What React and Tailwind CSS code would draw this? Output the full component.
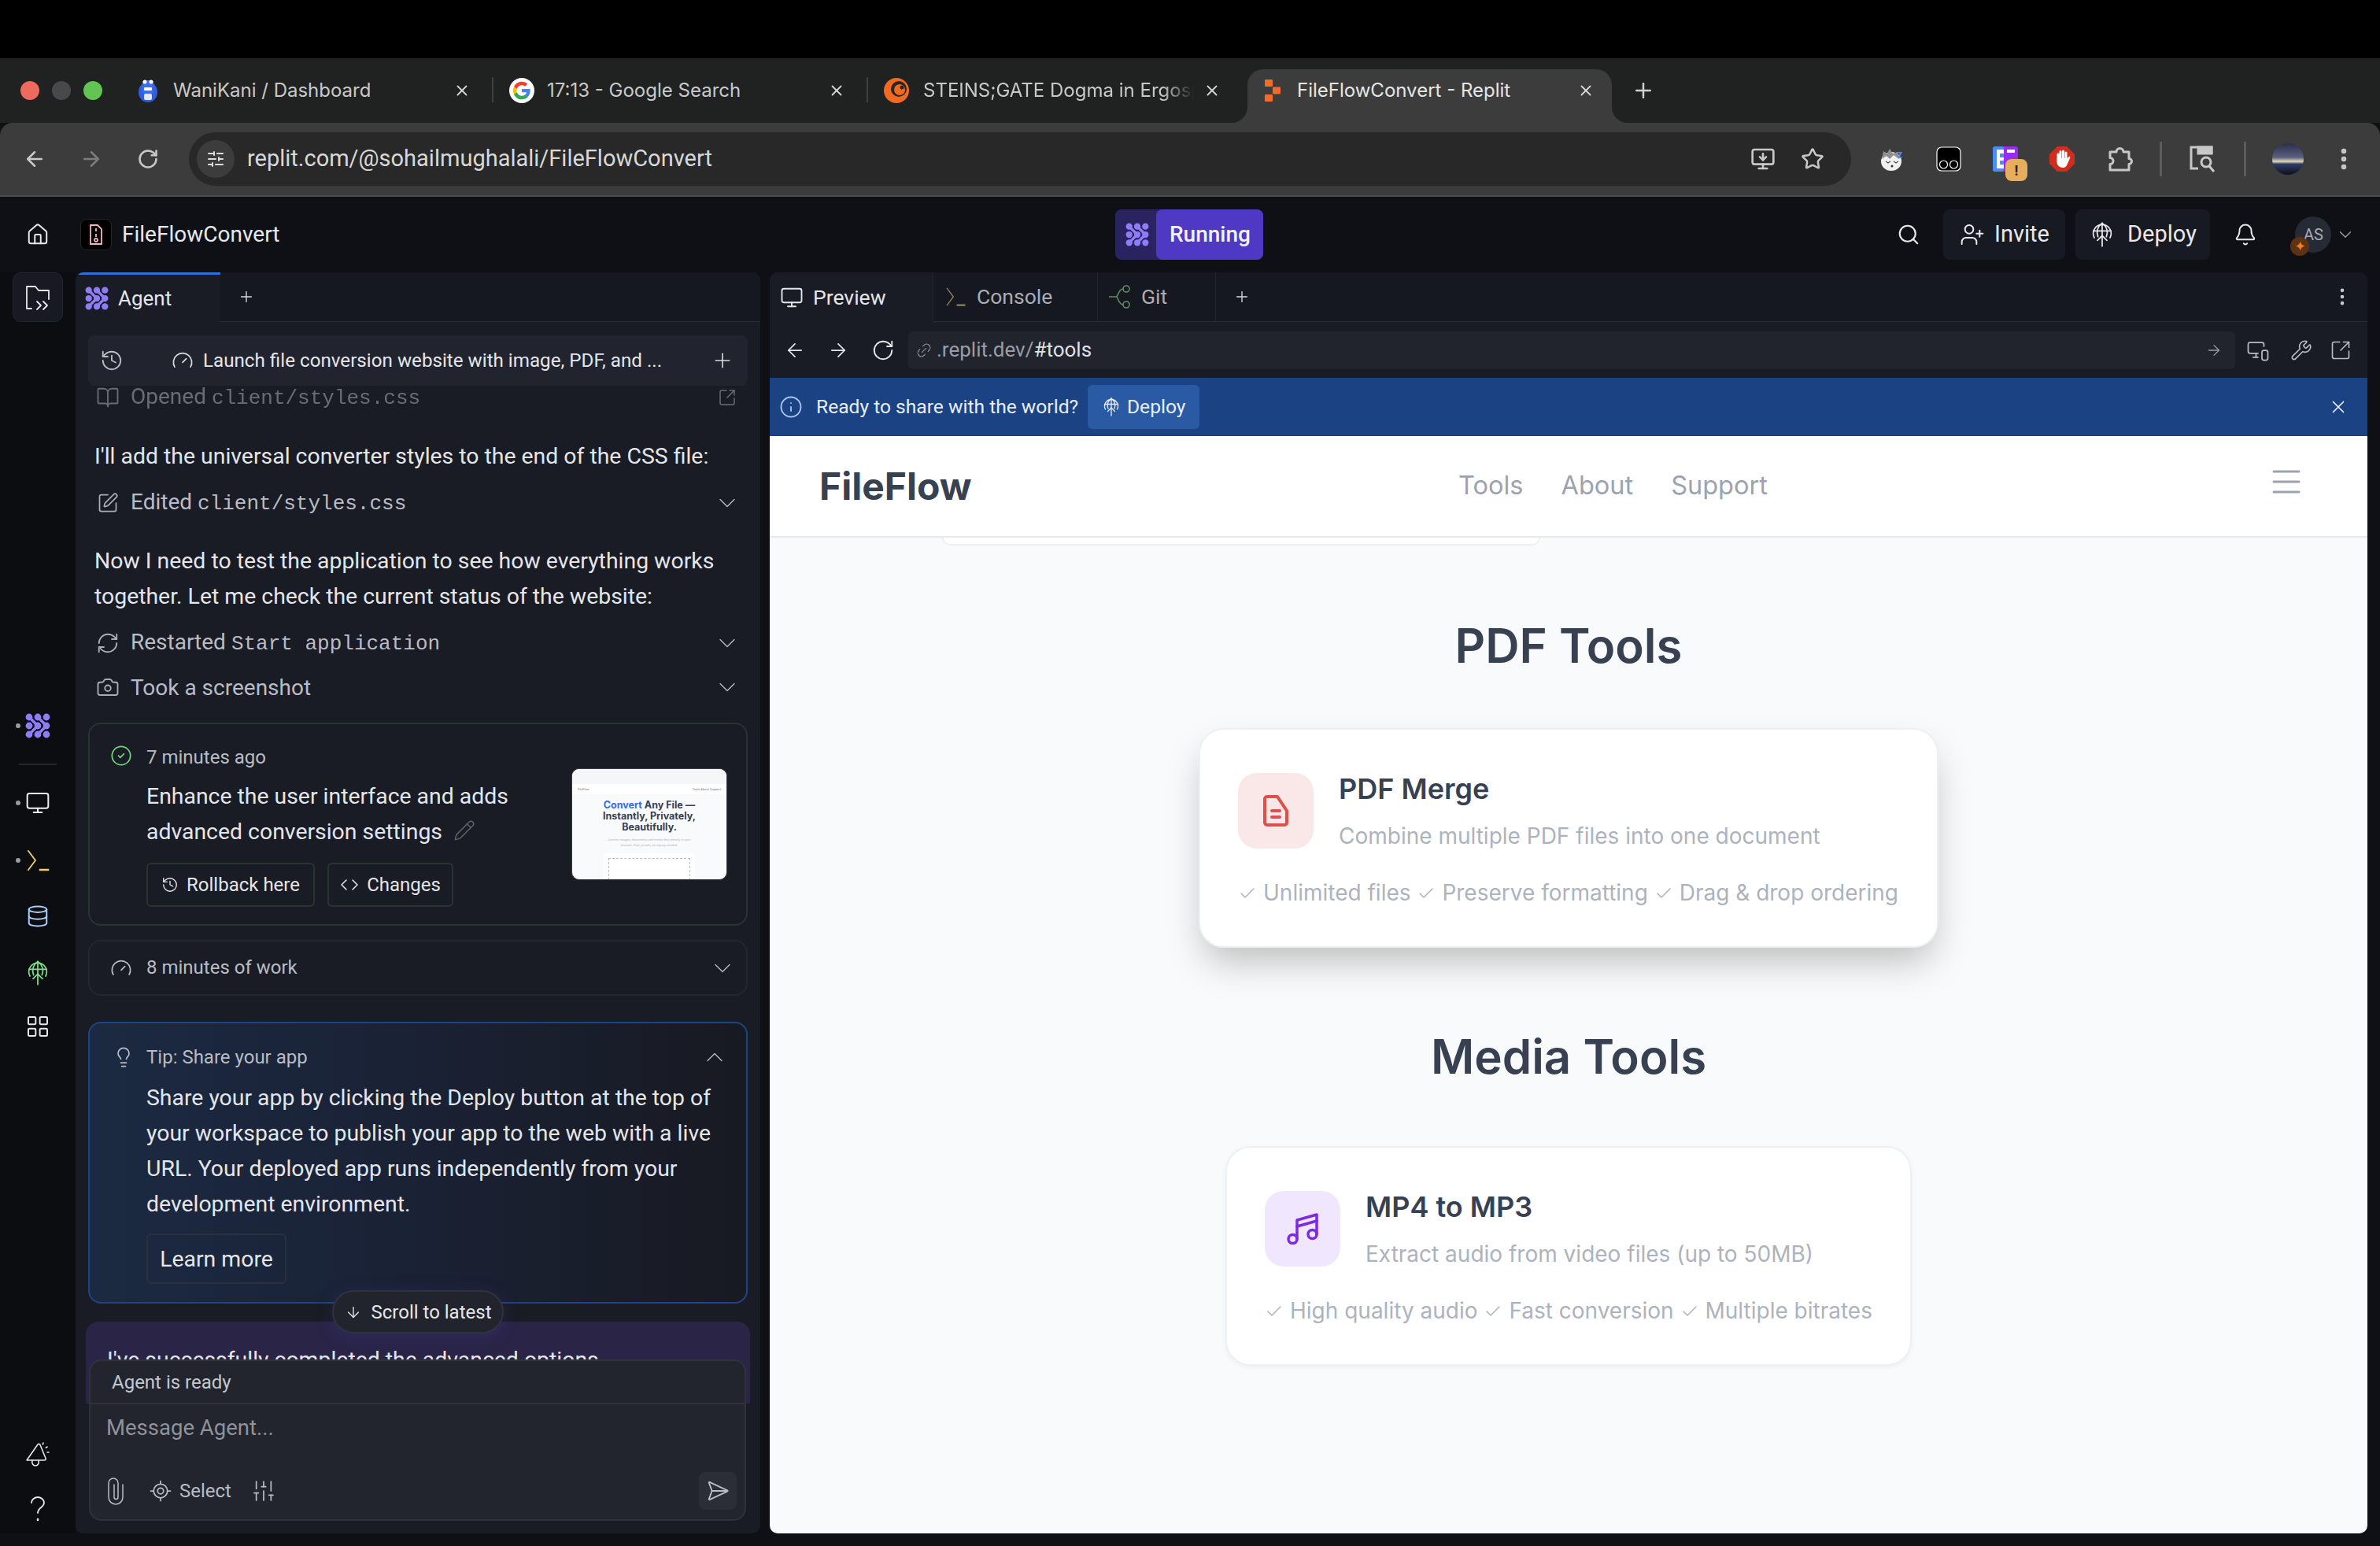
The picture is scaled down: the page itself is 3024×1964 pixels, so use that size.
import React from 'react';
import {
  ArrowDown, ArrowLeft, ArrowRight, Bell, BookOpen, Camera, Check, ChevronDown, ChevronUp, Code,
  Database, EllipsisVertical, Gauge, History, House, Info, LayoutGrid, Lightbulb, Link2,
  LocateFixed, Monitor, MonitorSmartphone, Pencil, Plus, RefreshCw, RotateCw, Search,
  SendHorizontal, SlidersVertical, SquareArrowOutUpRight, SquarePen, Star, UserPlus, Wrench, X,
  MonitorDown, CircleCheck,
} from 'lucide-react';

function AgentLogo({ size = 32, color = '#8f7cf7' }) {
  return (
    <svg width={size} height={size} viewBox="0 0 32 32" fill={color} stroke="none">
      <path d="M5 5L16 16L5 27M16 5L27 16L16 27" fill="none" stroke={color} strokeWidth="3.600" />
      <circle cx="5" cy="5" r="4.400" />
      <circle cx="16" cy="5" r="4.400" />
      <circle cx="27" cy="5" r="4.400" />
      <circle cx="5" cy="16" r="4.400" />
      <circle cx="16" cy="16" r="4.400" />
      <circle cx="27" cy="16" r="4.400" />
      <circle cx="5" cy="27" r="4.400" />
      <circle cx="16" cy="27" r="4.400" />
      <circle cx="27" cy="27" r="4.400" />
    </svg>
  );
}

function DeployIcon({ size = 30, color = 'currentColor' }) {
  return (
    <svg width={size} height={size} viewBox="0 0 24 24" fill="none" stroke={color} strokeWidth="1.300" strokeLinecap="round" strokeLinejoin="round">
      <path d="M4.500 15a8.500 8.500 0 1 1 15 0" />
      <path d="M3.500 8.500h17" />
      <path d="M12 1v22" />
      <path d="M8 14c-1.500-4-1-9 4-13 5 4 5.500 9 4 13" />
      <path d="M7.500 17.500l4.500-4.500 4.500 4.500" />
    </svg>
  );
}

function ChromeTab({ icon, title, box, active, fade, gap }) {
  return (
    <div className={`relative flex h-[68px] items-center pb-[14px] ${box} ${active ? 'rounded-t-[20px] bg-[#3c3c3c] text-[#e6e6e6]' : 'text-[#c9c9c9]'}`}>
      {active && (
        <>
          <div className="absolute bottom-0 left-[-20px] h-[20px] w-[20px] bg-[#3c3c3c]"><div className="h-full w-full rounded-br-[20px] bg-[#202221]" /></div>
          <div className="absolute bottom-0 right-[-20px] h-[20px] w-[20px] bg-[#3c3c3c]"><div className="h-full w-full rounded-bl-[20px] bg-[#202221]" /></div>
        </>
      )}
      <div className="flex w-[32px] shrink-0 justify-center">{icon}</div>
      <div className={`${gap} flex-1 overflow-hidden whitespace-nowrap font-[Inter,sans-serif] text-[24px] ${fade ? 'mr-[12px] [mask-image:linear-gradient(90deg,black_88%,transparent)]' : ''}`}>{title}</div>
      <X size={22} strokeWidth={2} className="shrink-0 text-[#d5d5d5]" />
    </div>
  );
}

function WaniKani() {
  return (
    <svg width="26" height="32" viewBox="0 0 26 32">
      <ellipse cx="13" cy="18" rx="12" ry="13" fill="#2f5fe0" />
      <rect x="6" y="3" width="14" height="17" rx="4" fill="#3f6cea" />
      <circle cx="9" cy="5" r="2.500" fill="#fff" />
      <circle cx="17" cy="5" r="2.500" fill="#fff" />
      <rect x="8" y="12" width="10" height="4" rx="1" fill="#fff" />
      <rect x="8" y="20" width="10" height="8" rx="2" fill="#dfe8ff" />
    </svg>
  );
}

function GoogleG() {
  return (
    <svg width="32" height="32" viewBox="0 0 48 48">
      <circle cx="24" cy="24" r="24" fill="#fff" />
      <path fill="#4285F4" d="M40 24.500c0-1.200-.1-2.300-.3-3.400H24v6.400h9c-.4 2.100-1.600 3.800-3.300 5v4.200h5.300c3.100-2.900 5-7.100 5-12.200z" />
      <path fill="#34A853" d="M24 41c4.500 0 8.200-1.500 11-4.100l-5.300-4.200c-1.500 1-3.400 1.600-5.700 1.600-4.300 0-8-2.900-9.300-6.900h-5.500v4.300C11.900 37.300 17.500 41 24 41z" />
      <path fill="#FBBC05" d="M14.700 27.400c-.7-2.100-.7-4.600 0-6.700v-4.300H9.200c-2.300 4.500-2.300 10.800 0 15.300l5.500-4.300z" />
      <path fill="#EA4335" d="M24 13.700c2.400 0 4.600.8 6.300 2.500l4.700-4.700C32.200 8.700 28.500 7 24 7 17.500 7 11.900 10.700 9.200 16.400l5.500 4.300c1.300-4 5-7 9.300-7z" />
    </svg>
  );
}

function Crunchyroll() {
  return (
    <svg width="32" height="32" viewBox="0 0 32 32">
      <circle cx="16" cy="16" r="16" fill="#f26a21" />
      <circle cx="19" cy="14" r="10" fill="#262826" />
      <circle cx="20" cy="15" r="7" fill="#f26a21" />
      <circle cx="23" cy="12" r="2.500" fill="#262826" />
    </svg>
  );
}

function ReplitMark() {
  return (
    <svg width="20" height="28" viewBox="0 0 20 28" fill="#f26b2a">
      <rect x="0" y="0" width="10" height="9" rx="1" />
      <rect x="10" y="9.500" width="10" height="9" rx="1" />
      <rect x="0" y="19" width="10" height="9" rx="1" />
    </svg>
  );
}

function ExtensionIcons() {
  return (
    <div className="flex items-center">
      <svg width="28" height="32" viewBox="0 0 28 32">
        <ellipse cx="13" cy="19" rx="13" ry="12" fill="#f1f1f1" />
        <path d="M1 16L3 6l5 3 3-6 4 6 6-2 2 9-7-5-5 5-4-4z" fill="#8f8f8f" />
        <path d="M6 19l3 2 3-2M16 19l3 2 3-2" stroke="#555" strokeWidth="1.400" fill="none" />
        <circle cx="14" cy="25" r="1.500" fill="#333" />
        <text x="20" y="15" fontSize="13" fontWeight="700" fill="#4a8df0" fontFamily="Inter">z</text>
      </svg>
      <svg width="32" height="32" viewBox="0 0 32 32" className="ml-[42px]">
        <rect x="1" y="1" width="30" height="30" rx="6" fill="#000" stroke="#fff" strokeWidth="1.200" />
        <circle cx="9.500" cy="23" r="5" fill="none" stroke="#fff" strokeWidth="1.200" />
        <circle cx="22.500" cy="23" r="5" fill="none" stroke="#fff" strokeWidth="1.200" />
      </svg>
      <div className="relative ml-[40px] h-[32px] w-[32px]">
        <svg width="32" height="32" viewBox="0 0 32 32">
          <rect width="32" height="32" rx="3" fill="#9a2cf0" />
          <rect width="14" height="32" rx="3" fill="#4a8ef5" />
          <path d="M5 4h9v5H9v5h5v4H9v5h5v5H5z" fill="#fff" />
          <rect x="18" y="4" width="10" height="4" fill="#fff" />
        </svg>
        <div className="absolute left-[16px] top-[16px] flex h-[28px] w-[28px] items-center justify-center rounded-[8px] bg-[#e6ad5c] text-[18px] font-bold text-[#222]">!</div>
      </div>
      <svg width="32" height="32" viewBox="0 0 32 32" className="ml-[40px]">
        <path d="M10 0h12l10 10v12L22 32H10L0 22V10z" fill="#d02d20" />
        <path d="M11 19v-9M14 18V6.500M17.500 18V6M21 18V8" stroke="#fff" strokeWidth="3" strokeLinecap="round" fill="none" />
        <path d="M9.500 15h13l3-2.500c1 .5 1 1.500.5 2.500l-3 7c-1 3-3 5-6 5-4 0-7.500-3-7.500-7z" fill="#fff" />
      </svg>
      <svg width="32" height="32" viewBox="0 0 32 32" fill="none" stroke="#c7c7c7" strokeWidth="3" strokeLinejoin="round" className="ml-[42px]">
        <path d="M3 7h8a4.500 4.500 0 0 1 9 0h7v8.500a3.500 3.500 0 0 1 0 7V30H3v-7.500a4 4 0 0 0 0-8z" />
      </svg>
    </div>
  );
}

function ChromeBar() {
  return (
    <>
      <div className="h-[74px] bg-black" />
      <div className="flex h-[82px] items-start bg-[#202221] pt-[14px]">
        <div className="flex h-[68px] w-[160px] items-center gap-[16px] pb-[14px] pl-[26px]">
          <div className="h-[24px] w-[24px] rounded-full bg-[#ee6a5f]" />
          <div className="h-[24px] w-[24px] rounded-full bg-[#47494a]" />
          <div className="h-[24px] w-[24px] rounded-full bg-[#61c554]" />
        </div>
        <ChromeTab box="w-[465px] pl-[12px] pr-[27px]" gap="ml-[16px]" icon={<WaniKani />} title="WaniKani / Dashboard" />
        <div className="mt-[10px] h-[32px] w-[2px] bg-[#3f4140]" />
        <ChromeTab box="w-[474px] pl-[20px] pr-[27px]" gap="ml-[16px]" icon={<GoogleG />} title="17:13 - Google Search" />
        <div className="mt-[10px] h-[32px] w-[2px] bg-[#3f4140]" />
        <ChromeTab box="w-[482px] pl-[20px] pr-[34px]" gap="ml-[18px]" icon={<Crunchyroll />} fade title="STEINS;GATE Dogma in Ergosphere" />
        <ChromeTab box="w-[463px] pl-[16px] pr-[22px]" gap="ml-[15px]" active icon={<ReplitMark />} title="FileFlowConvert - Replit" />
        <Plus size={30} strokeWidth={2} className="ml-[25px] mt-[12px] text-[#d0d0d0]" />
      </div>
      <div className="flex h-[94px] items-center rounded-t-[16px] border-b-[2px] border-[#4d4d4d] bg-[#3c3c3c]">
        <ArrowLeft size={30} strokeWidth={2} className="ml-[29px] text-[#c8c8c8]" />
        <ArrowRight size={30} strokeWidth={2} className="ml-[42px] text-[#7d7d7d]" />
        <RotateCw size={28} strokeWidth={2.2} className="ml-[43px] text-[#c8c8c8]" />
        <div className="ml-[38px] flex h-[68px] w-[2112px] items-center rounded-full bg-[#282828]">
          <div className="ml-[10px] flex h-[48px] w-[48px] items-center justify-center rounded-full bg-[#3c3c3c]">
            <SlidersVertical size={24} strokeWidth={2} className="rotate-90 text-[#dedede]" />
          </div>
          <div className="ml-[16px] flex-1 text-[29px] text-[#d8d8d8]">replit.com/@sohailmughalali/FileFlowConvert</div>
          <MonitorDown size={32} strokeWidth={2} className="text-[#c8c8c8]" />
          <Star size={30} strokeWidth={2} className="ml-[32px] mr-[34px] text-[#c8c8c8]" />
        </div>
        <div className="ml-[38px]"><ExtensionIcons /></div>
        <div className="ml-[34px] h-[44px] w-[3px] bg-[#5c5c5c]" />
        <svg width="36" height="36" viewBox="0 0 36 36" fill="none" stroke="#c8c8c8" strokeWidth="3" className="ml-[34px]">
          <path d="M12 30H3V3h26v8" />
          <path d="M12 3h17v8H12z" fill="#c8c8c8" />
          <circle cx="22" cy="22" r="6" />
          <path d="M26 27l6 7" />
        </svg>
        <div className="ml-[34px] h-[44px] w-[3px] bg-[#5c5c5c]" />
        <div className="ml-[33px] h-[40px] w-[40px] rounded-full bg-[linear-gradient(180deg,#2a2e4a_0%,#5b6080_45%,#e3d9b5_58%,#2f3e66_66%,#0c0f1d_100%)]" />
        <EllipsisVertical size={34} strokeWidth={2.6} className="ml-[34px] text-[#c8c8c8]" />
      </div>
    </>
  );
}

function AppHeader() {
  return (
    <div className="flex h-[96px] items-center bg-[#0e1015]">
      <House size={30} strokeWidth={1.6} className="ml-[33px] text-[#e8e8ea]" />
      <div className="ml-[39px] flex h-[40px] w-[40px] items-center justify-center rounded-[8px] border border-[#24262c] bg-black">
        <svg width="18" height="26" viewBox="0 0 18 26" fill="none" stroke="#f0b5c0" strokeWidth="1.800">
          <path d="M2 1h9l5 5v19H2z" />
          <path d="M9 5v4M9 12v4" />
          <circle cx="9" cy="20" r="2" />
        </svg>
      </div>
      <div className="ml-[13px] text-[28px] text-[#e8e9ec]">FileFlowConvert</div>
      <div className="ml-[1062px] flex h-[64px] w-[188px] rounded-[8px] bg-[#2a2362]">
        <div className="flex w-[52px] items-center justify-center pl-[3px]"><AgentLogo size={30} /></div>
        <div className="flex flex-1 items-center justify-center rounded-[8px] bg-[#4f39c4] text-[28px] font-medium text-[#f2f0ff]">Running</div>
      </div>
      <Search size={30} strokeWidth={1.7} className="ml-[805px] text-[#e8e8ea]" />
      <div className="ml-[29px] flex h-[64px] w-[155px] items-center justify-center gap-[12px] rounded-[8px] bg-[#171a22] text-[29px] text-[#e8e9ec]">
        <UserPlus size={32} strokeWidth={1.5} />
        Invite
      </div>
      <div className="ml-[13px] flex h-[64px] w-[171px] items-center justify-center gap-[16px] rounded-[8px] bg-[#171a22] text-[29px] text-[#e8e9ec]">
        <DeployIcon size={32} />
        Deploy
      </div>
      <Bell size={30} strokeWidth={1.6} className="ml-[30px] text-[#e8e8ea]" />
      <div className="relative ml-[48px] flex h-[46px] w-[46px] items-center justify-center rounded-full bg-[#262a35] text-[20px] text-[#a9acb5]">
        AS
        <div className="absolute bottom-[-4px] left-[-6px] flex h-[24px] w-[24px] items-center justify-center rounded-full bg-[#5c3213] text-[18px] leading-none text-[#f07a2c]">✦</div>
      </div>
      <ChevronDown size={26} strokeWidth={1.3} className="ml-[5px] text-[#9c9fa8]" />
    </div>
  );
}

function SideIcon({ children, dot, className = '' }) {
  return (
    <div className={`relative flex h-[40px] w-[96px] items-center justify-center ${className}`}>
      {dot && <div className="absolute left-[20px] h-[6px] w-[6px] rounded-full bg-[#9a9ca4]" />}
      {children}
    </div>
  );
}

function TerminalGlyph({ color = '#f2d06b', size = 34, width = 1.8 }) {
  return (
    <svg width={size} height={size} viewBox="0 0 34 34" fill="none" stroke={color} strokeWidth={width} strokeLinecap="square">
      <path d="M5 5l9 12-9 12" />
      <path d="M20 29h10" strokeWidth="2.500" />
    </svg>
  );
}

function Sidebar() {
  return (
    <div className="flex w-[96px] shrink-0 flex-col items-center bg-[#0c0d11]">
      <div className="mx-auto flex h-[63px] w-[64px] items-center justify-center rounded-[10px] border border-[#24262e] bg-[#171a22]">
        <svg width="32" height="34" viewBox="0 0 32 34" fill="none" stroke="#e8e8ea" strokeWidth="1.800" strokeLinecap="round" strokeLinejoin="round">
          <path d="M8 31H2V3h11l4 5h13v11" />
          <path d="M15 22l5 5-5 5M23 22l5 5-5 5" />
        </svg>
      </div>
      <SideIcon dot className="mt-[493px]"><AgentLogo size={32} /></SideIcon>
      <div className="mt-[28px] h-[2px] w-[48px] bg-[#24262c]" />
      <SideIcon dot className="mt-[28px]"><Monitor size={32} strokeWidth={1.5} className="text-[#eceef0]" /></SideIcon>
      <SideIcon dot className="mt-[33px]"><TerminalGlyph /></SideIcon>
      <SideIcon className="mt-[31px]"><Database size={30} strokeWidth={1.6} className="text-[#a9cdf5]" /></SideIcon>
      <SideIcon className="mt-[32px]"><DeployIcon size={32} color="#7fe08a" /></SideIcon>
      <SideIcon className="mt-[28px]"><LayoutGrid size={32} strokeWidth={1.5} className="text-[#e4e6ea]" /></SideIcon>
      <SideIcon className="mt-[504px]">
        <svg width="32" height="32" viewBox="0 0 32 32" fill="none" stroke="#e4e6ea" strokeWidth="1.600" strokeLinecap="round" strokeLinejoin="round">
          <path d="M2 23L16 3c1-1 2-1 3 .500l7 17c.500 1.500 0 2.500-1.500 2.500z" />
          <path d="M9 23c-1 4 1 7 4 7s5-3 4-7" />
          <path d="M23 1l-1 3M28 6l-3 2M30 13h-3" strokeDasharray="2 2" />
        </svg>
      </SideIcon>
      <SideIcon className="mt-[29px]">
        <svg width="24" height="34" viewBox="0 0 24 34" fill="none" stroke="#e4e6ea" strokeWidth="1.800" strokeLinecap="round">
          <path d="M4 9c0-4 4-7 8-7s8 3 8 7c0 6-8 6-8 13" />
          <path d="M12 30v1" strokeWidth="2.600" />
        </svg>
      </SideIcon>
    </div>
  );
}

function ActionRow({ icon, label, mono, className = '' }) {
  return (
    <div className={`flex h-[34px] items-center pl-[8px] pr-[8px] ${className}`}>
      <div className="flex w-[34px] shrink-0 justify-center text-[#a9acb4]">{icon}</div>
      <div className="ml-[12px] flex-1 whitespace-nowrap text-[28px] text-[#b9bcc4]">
        {label}{mono && ' '}{mono && <span className="font-['Liberation_Mono',monospace] text-[26px]">{mono}</span>}
      </div>
      <ChevronDown size={36} strokeWidth={0.9} className="text-[#b9bcc4]" />
    </div>
  );
}

function Thumbnail() {
  return (
    <div className="h-[142px] w-[198px] shrink-0 overflow-hidden rounded-[10px] border border-[#3a3d46] bg-[#f9fafb] text-center">
      <div className="h-[19px] bg-[#f5f6f7]" />
      <div className="flex h-[13px] items-center justify-between bg-white px-[7px] text-[4px] text-[#777]"><span>FileFlow</span><span>Tools About Support</span></div>
      <div className="mt-[7px] font-[Inter,sans-serif] text-[12.500px] font-bold leading-[14px] text-[#374151]">
        <span className="text-[#2f6fe8]">Convert</span> Any File —<br />Instantly, Privately,<br />Beautifully.
      </div>
      <div className="mt-[5px] text-[4px] leading-[7px] text-[#b5b5b5]">Convert images, documents and media files directly in your<br />browser. Fast, private, no signup needed.</div>
      <div className="mx-auto mt-[7px] h-[40px] w-[116px] rounded-t-[4px] bg-white p-[6px]"><div className="h-full border border-dashed border-b-0 border-[#bbb]" /></div>
    </div>
  );
}

function AgentPanel() {
  return (
    <div className="relative flex w-[870px] shrink-0 flex-col overflow-hidden rounded-[10px] bg-[#191c25]">
      <div className="flex h-[63px] shrink-0 bg-[#161821]">
        <div className="flex w-[184px] items-center gap-[12px] border-t-[3px] border-[#2f6fe0] bg-[#191c25] pl-[12px] text-[26px] text-[#e4e6ea]">
          <AgentLogo size={30} />
          Agent
        </div>
        <div className="flex flex-1 items-center border-b border-[#2a2d36] pl-[22px]">
          <Plus size={22} strokeWidth={1.5} className="text-[#d8dade]" />
        </div>
      </div>
      <div className="mx-[16px] mt-[17px] flex h-[64px] shrink-0 items-center rounded-[8px] bg-[#21242e] text-[24.200px] text-[#e4e6ea]">
        <History size={30} strokeWidth={1.5} className="ml-[15px] text-[#b9bcc4]" />
        <Gauge size={28} strokeWidth={1.5} className="ml-[61px] text-[#d8dade]" />
        <div className="ml-[12px] flex-1 whitespace-nowrap">Launch file conversion website with image, PDF, and ...</div>
        <Plus size={30} strokeWidth={1.3} className="mr-[17px] text-[#d8dade]" />
      </div>
      <div className="min-h-0 flex-1 overflow-hidden px-[16px] text-[28.400px] leading-[45px] text-[#e4e6ea]">
        <div className="flex h-[30px] items-center pl-[10px] pr-[14px] leading-[30px] opacity-50">
          <BookOpen size={30} strokeWidth={1.5} className="text-[#b9bcc4]" />
          <div className="ml-[14px] flex-1 whitespace-nowrap text-[28px] text-[#b9bcc4]">Opened <span className="font-['Liberation_Mono',monospace] text-[26px]">client/styles.css</span></div>
          <SquareArrowOutUpRight size={24} strokeWidth={1.5} className="text-[#b9bcc4]" />
        </div>
        <p className="mt-[37px] whitespace-nowrap px-[8px]">I'll add the universal converter styles to the end of the CSS file:</p>
        <ActionRow className="mt-[20px]" icon={<SquarePen size={28} strokeWidth={1.5} />} label="Edited" mono="client/styles.css" />
        <p className="mt-[34px] px-[8px]">Now I need to test the application to see how everything works together. Let me check the current status of the website:</p>
        <ActionRow className="mt-[20px]" icon={<RefreshCw size={30} strokeWidth={1.5} />} label="Restarted" mono="Start application" />
        <ActionRow className="mt-[22px]" icon={<Camera size={30} strokeWidth={1.5} />} label="Took a screenshot" />

        <div className="mt-[28px] flex h-[258px] rounded-[16px] border-2 border-[#293430] pl-[26px] pr-[24px]">
          <div className="w-[46px] shrink-0 pt-[26px]"><CircleCheck size={28} strokeWidth={1.5} className="text-[#6fd67c]" /></div>
          <div className="flex-1">
            <div className="mt-[22px] text-[24px] leading-[40px] text-[#b9bcc4]">7 minutes ago</div>
            <div className="mt-[7px] text-[#e4e6ea]">
              Enhance the user interface and adds<br />advanced conversion settings
              <Pencil size={28} strokeWidth={1.3} className="ml-[14px] inline-block align-[-3px] text-[#5f626b]" />
            </div>
            <div className="mt-[17px] flex gap-[16px] text-[24px] leading-none text-[#e4e6ea]">
              <div className="flex h-[56px] w-[214px] items-center justify-center gap-[10px] rounded-[6px] border-2 border-[#293430]"><History size={22} strokeWidth={1.5} />Rollback here</div>
              <div className="flex h-[56px] w-[160px] items-center justify-center gap-[10px] rounded-[6px] border-2 border-[#293430]"><Code size={24} strokeWidth={1.5} />Changes</div>
            </div>
          </div>
          <div className="-ml-[62px] mt-[56px]"><Thumbnail /></div>
        </div>

        <div className="mt-[18px] flex h-[71px] items-center rounded-[16px] border-2 border-[#22262f] pl-[26px] pr-[12px] text-[24px] text-[#b9bcc4]">
          <Gauge size={28} strokeWidth={1.5} />
          <div className="ml-[18px] flex-1">8 minutes of work</div>
          <ChevronDown size={36} strokeWidth={0.9} />
        </div>

        <div className="mt-[33px] h-[358px] rounded-[16px] border-2 border-[#1c4587] bg-[linear-gradient(90deg,#1b2a42_0%,#1a2236_45%,#181a22_100%)] pl-[29px] pr-[22px]">
          <div className="flex h-[86px] items-center text-[24px] text-[#b9bcc4]">
            <Lightbulb size={28} strokeWidth={1.5} />
            <div className="ml-[15px] flex-1">Tip: Share your app</div>
            <ChevronUp size={36} strokeWidth={0.9} />
          </div>
          <p className="-mt-[14px] ml-[43px] w-[745px] text-[#e4e6ea]">Share your app by clicking the Deploy button at the top of your workspace to publish your app to the web with a live URL. Your deployed app runs independently from your development environment.</p>
          <div className="ml-[43px] mt-[15px] flex h-[64px] w-[178px] items-center justify-center rounded-[6px] border-2 border-[#2a3040] text-[#e4e6ea]">Learn more</div>
        </div>

        <div className="-mx-[3px] mt-[23px] h-[104px] rounded-t-[16px] bg-[#2a2547] pl-[27px] pt-[26px] text-[#e4e6ea]">I've successfully completed the advanced options</div>
      </div>

      <div className="absolute left-[326px] top-[1293px] flex h-[55px] w-[218px] items-center justify-center gap-[12px] rounded-full border-2 border-[#30333c] bg-[#21242c] text-[24px] text-[#e4e6ea] shadow-[0_4px_20px_rgba(60,50,140,0.35)]">
        <ArrowDown size={22} strokeWidth={1.5} />
        Scroll to latest
      </div>

      <div className="absolute bottom-[16px] left-[17px] h-[205px] w-[835px] rounded-[16px] border-2 border-[#2f323b] bg-[#22252e]">
        <div className="flex h-[55px] items-center border-b-2 border-[#2f323b] pl-[27px] text-[24px] text-[#c5c7ce]">Agent is ready</div>
        <div className="mt-[8px] pl-[20px] text-[27.500px] leading-[44px] text-[#8f929b]">Message Agent...</div>
        <div className="mt-[34px] flex items-center pl-[20px] pr-[10px] text-[#b9bcc4]">
          <svg width="24" height="36" viewBox="0 0 24 36" fill="none" stroke="currentColor" strokeWidth="1.500" strokeLinecap="round">
            <path d="M21 10v16a9 9 0 0 1-18 0V8a6 6 0 0 1 12 0v18a2.500 2.500 0 0 1-5 0V10" />
          </svg>
          <LocateFixed size={30} strokeWidth={1.4} className="ml-[30px]" />
          <div className="ml-[9px] text-[24px]">Select</div>
          <SlidersVertical size={32} strokeWidth={1.3} className="ml-[25px]" />
          <div className="ml-auto flex h-[48px] w-[48px] items-center justify-center rounded-[8px] bg-[#2b2e37]">
            <SendHorizontal size={30} strokeWidth={1.5} />
          </div>
        </div>
      </div>
    </div>
  );
}

function PreviewTab({ icon, label, width, active }) {
  return (
    <div className={`flex items-center gap-[12px] border-r border-[#22252e] pl-[13px] text-[26.500px] ${width} ${active ? 'bg-[#191c25] text-[#e4e6ea]' : 'border-b border-b-[#2a2d36] text-[#a9acb4]'}`}>
      {icon}
      {label}
    </div>
  );
}

function ToolCard({ iconBg, icon, title, desc, features, width, shadow }) {
  return (
    <div className={`h-[279px] rounded-[32px] border-2 border-[#eef0f2] bg-white px-[48px] ${width} ${shadow}`}>
      <div className="mt-[55px] flex">
        <div className={`flex h-[96px] w-[96px] shrink-0 items-center justify-center rounded-[24px] ${iconBg}`}>{icon}</div>
        <div className="ml-[32px] whitespace-nowrap">
          <div className="-mt-[4px] text-[36px] font-semibold leading-[48px] text-[#374151]">{title}</div>
          <div className="mt-[14px] text-[28px] leading-[44px] text-[#adb3bd]">{desc}</div>
        </div>
      </div>
      <div className="mt-[28px] whitespace-nowrap text-[28px] leading-[44px] text-[#adb3bd]">
        {features.map((f, i) => (
          <span key={f}>{i > 0 && ' '}<Check size={24} strokeWidth={1.5} className="mr-[8px] inline-block align-[-3px]" />{f}</span>
        ))}
      </div>
    </div>
  );
}

function PreviewPanel() {
  return (
    <div className="flex min-w-0 flex-1 flex-col overflow-hidden rounded-[10px] bg-[#191c25]">
      <div className="flex h-[63px] shrink-0 bg-[#161821]">
        <PreviewTab active width="w-[208px]" label="Preview" icon={<Monitor size={30} strokeWidth={1.5} />} />
        <PreviewTab width="w-[209px]" label="Console" icon={<TerminalGlyph size={30} color="#8f8558" width={1.5} />} />
        <PreviewTab width="w-[150px]" label="Git" icon={
          <svg width="30" height="32" viewBox="0 0 30 32" fill="none" stroke="#5f8f63" strokeWidth="1.600">
            <path d="M1 16h9M10 16c3 0 3-10 9-10M10 16c3 0 3 10 9 10" />
            <circle cx="23" cy="6" r="4" />
            <circle cx="23" cy="26" r="4" />
          </svg>
        } />
        <div className="flex flex-1 items-center justify-between border-b border-[#2a2d36] pl-[22px] pr-[18px]">
          <Plus size={22} strokeWidth={1.5} className="text-[#d8dade]" />
          <EllipsisVertical size={28} strokeWidth={2} className="text-[#c5c7ce]" />
        </div>
      </div>
      <div className="flex h-[71px] shrink-0 items-center pl-[18px] text-[#e4e6ea]">
        <ArrowLeft size={28} strokeWidth={1.5} />
        <ArrowRight size={28} strokeWidth={1.5} className="ml-[27px]" />
        <RotateCw size={30} strokeWidth={1.5} className="ml-[28px]" />
        <div className="ml-[17px] flex h-[48px] w-[1686px] items-center rounded-[6px] bg-[#21242d] pl-[9px] pr-[16px] text-[26px]">
          <Link2 size={22} strokeWidth={1.3} className="-rotate-45 text-[#8d9099]" />
          <span className="ml-[5px] text-[#9a9da6]">.replit.dev/</span><span className="flex-1 text-[#dfe1e6]">#tools</span>
          <ArrowRight size={22} strokeWidth={1.4} className="text-[#9a9da6]" />
        </div>
        <MonitorSmartphone size={30} strokeWidth={1.4} className="ml-[14px] text-[#b9bcc4]" />
        <Wrench size={28} strokeWidth={1.4} className="ml-[26px] text-[#b9bcc4]" />
        <SquareArrowOutUpRight size={28} strokeWidth={1.4} className="ml-[22px] text-[#b9bcc4]" />
      </div>
      <div className="flex h-[74px] shrink-0 items-center bg-[#1b4384] pl-[12px] pr-[24px] text-[24.600px] text-[#e8eefa]">
        <Info size={30} strokeWidth={1.5} className="text-[#a9c6f2]" />
        <div className="ml-[17px]">Ready to share with the world?</div>
        <div className="ml-[12px] flex h-[56px] w-[142px] items-center justify-center gap-[8px] rounded-[6px] bg-[#2b5aa5]">
          <DeployIcon size={24} />
          Deploy
        </div>
        <X size={26} strokeWidth={1.6} className="ml-auto" />
      </div>
      <div className="relative flex min-h-0 flex-1 flex-col overflow-hidden bg-[#f9fafb] font-[Inter,sans-serif]">
        <div className="flex h-[129px] shrink-0 items-center border-b-2 border-[#e7e9ed] bg-white pl-[63px]">
          <div className="w-[812px] text-[48px] font-bold text-[#374151]">FileFlow</div>
          <div className="flex gap-[48px] text-[32.500px] text-[#9ca3af]"><span>Tools</span><span>About</span><span>Support</span></div>
          <svg width="36" height="30" viewBox="0 0 36 30" fill="none" stroke="#9ca3af" strokeWidth="3" strokeLinecap="round" className="-mt-[12px] ml-auto mr-[85px]">
            <path d="M2 2h32M2 15h32M2 28h32" />
          </svg>
        </div>
        <div className="ml-[219px] h-[10px] w-[760px] shrink-0 rounded-b-[24px] border-2 border-t-0 border-[#eef0f2] bg-white" />
        <div className="flex flex-col items-center">
          <h2 className="mt-[87px] text-[60px] font-semibold leading-[80px] text-[#374151]">PDF Tools</h2>
          <div className="mt-[65px]">
            <ToolCard
              width="w-[940px]"
              shadow="shadow-[0_24px_48px_-8px_rgba(0,0,0,0.25)]"
              iconBg="bg-[#fae8e8]"
              icon={
                <svg width="32" height="40" viewBox="0 0 32 40" fill="none" stroke="#e04f48" strokeWidth="4" strokeLinecap="round" strokeLinejoin="round">
                  <path d="M5 2h13l12 18v15a3 3 0 0 1-3 3H5a3 3 0 0 1-3-3V5a3 3 0 0 1 3-3z" />
                  <path d="M11 20h10M11 28h10" />
                </svg>
              }
              title="PDF Merge"
              desc="Combine multiple PDF files into one document"
              features={['Unlimited files', 'Preserve formatting', 'Drag & drop ordering']}
            />
          </div>
          <h2 className="mt-[98px] text-[60px] font-semibold leading-[80px] text-[#374151]">Media Tools</h2>
          <div className="mt-[74px]">
            <ToolCard
              width="w-[872px]"
              shadow="shadow-[0_2px_6px_rgba(0,0,0,0.05)]"
              iconBg="bg-[#f0e6fd]"
              icon={
                <svg width="40" height="40" viewBox="0 0 40 40" fill="none" stroke="#7c2be0" strokeWidth="3.500" strokeLinecap="round" strokeLinejoin="round">
                  <path d="M13 33V9L38 2v25" />
                  <path d="M13 17l25-7" />
                  <circle cx="7.500" cy="33" r="5.500" />
                  <circle cx="32.500" cy="27" r="5.500" />
                </svg>
              }
              title="MP4 to MP3"
              desc="Extract audio from video files (up to 50MB)"
              features={['High quality audio', 'Fast conversion', 'Multiple bitrates']}
            />
          </div>
        </div>
      </div>
    </div>
  );
}

export default function App() {
  return (
    <div className="flex h-[1964px] w-[3024px] flex-col overflow-hidden bg-[#0e1015] font-[Roboto,sans-serif]">
      <ChromeBar />
      <AppHeader />
      <div className="flex min-h-0 flex-1 pb-[16px] pr-[16px]">
        <Sidebar />
        <AgentPanel />
        <div className="w-[12px] shrink-0" />
        <PreviewPanel />
      </div>
    </div>
  );
}
